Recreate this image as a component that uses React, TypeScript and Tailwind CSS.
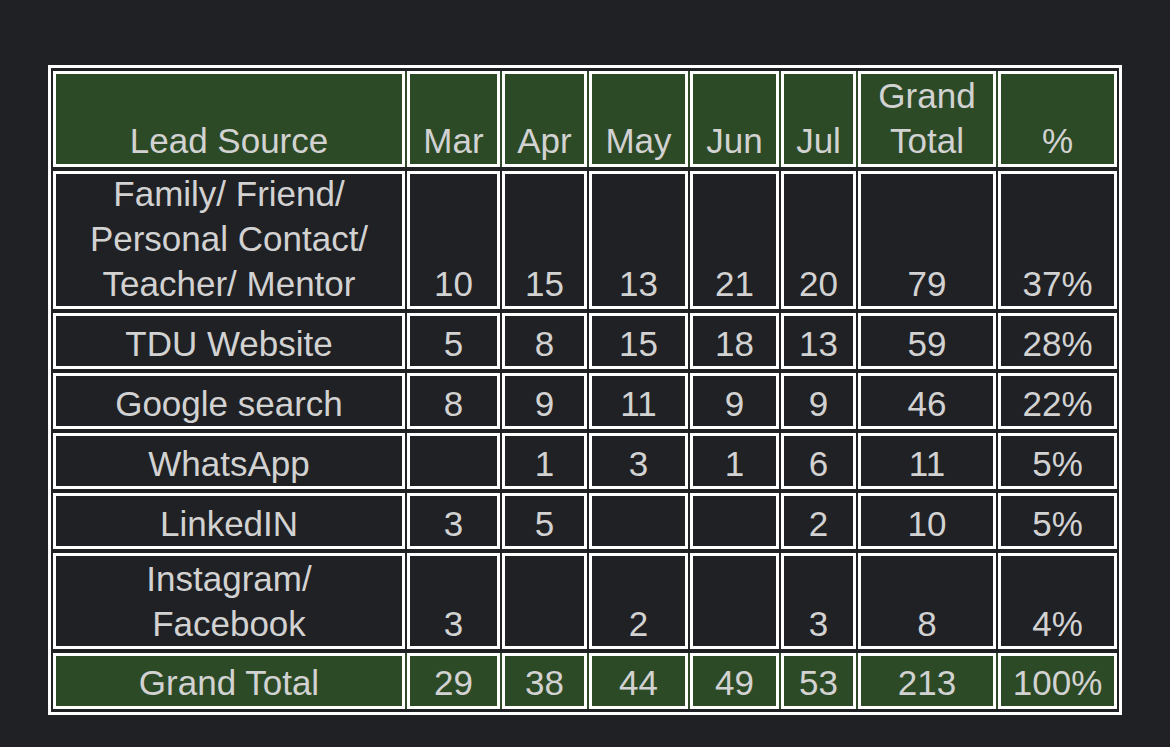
import React from "react";

const widths = [
  "w-[352px]",
  "w-[93px]",
  "w-[85px]",
  "w-[99px]",
  "w-[89px]",
  "w-[75px]",
  "w-[138px]",
  "w-[119px]",
];

type Row = { cells: React.ReactNode[]; h: string; green?: boolean };

const rows: Row[] = [
  {
    green: true,
    h: "h-[96px]",
    cells: [
      "Lead Source",
      "Mar",
      "Apr",
      "May",
      "Jun",
      "Jul",
      <>
        Grand
        <br />
        Total
      </>,
      "%",
    ],
  },
  {
    h: "h-[138px]",
    cells: [
      <>
        Family/ Friend/
        <br />
        Personal Contact/
        <br />
        Teacher/ Mentor
      </>,
      "10",
      "15",
      "13",
      "21",
      "20",
      "79",
      "37%",
    ],
  },
  { h: "h-[56px]", cells: ["TDU Website", "5", "8", "15", "18", "13", "59", "28%"] },
  { h: "h-[56px]", cells: ["Google search", "8", "9", "11", "9", "9", "46", "22%"] },
  { h: "h-[56px]", cells: ["WhatsApp", "", "1", "3", "1", "6", "11", "5%"] },
  { h: "h-[56px]", cells: ["LinkedIN", "3", "5", "", "", "2", "10", "5%"] },
  {
    h: "h-[96px]",
    cells: [
      <>
        Instagram/
        <br />
        Facebook
      </>,
      "3",
      "",
      "2",
      "",
      "3",
      "8",
      "4%",
    ],
  },
  {
    green: true,
    h: "h-[56px]",
    cells: ["Grand Total", "29", "38", "44", "49", "53", "213", "100%"],
  },
];

export default function App() {
  return (
    <div
      className="w-full h-[747px] bg-[#202124] pt-[65px] pl-[48px] text-[#d2d2d2]"
      style={{ fontFamily: '"Liberation Sans", Arial, Helvetica, sans-serif' }}
    >
      <div className="w-[1074px] border-[3px] border-white px-[2px] pt-[3px] pb-[3px] flex flex-col gap-[4px]">
        {rows.map((r, ri) => (
          <div
            key={ri}
            className={`flex gap-[2px] ${r.green ? "bg-[#2f4a29]" : "bg-[#202124]"}`}
          >
            {r.cells.map((c, ci) => (
              <div
                key={ci}
                className={`${widths[ci]} ${r.h} shrink-0 border-[3px] border-white flex flex-col justify-end items-center text-center text-[35px] leading-[45px] whitespace-nowrap ${
                  r.green ? "bg-[#2d4a26] pb-[1px]" : "bg-[#202124]"
                }`}
              >
                <div>{c}</div>
              </div>
            ))}
          </div>
        ))}
      </div>
    </div>
  );
}
